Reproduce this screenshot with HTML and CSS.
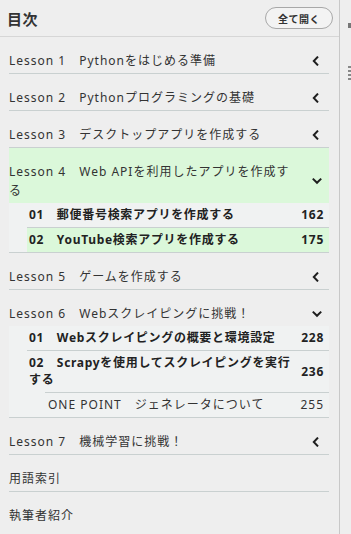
FILE: index.html
```html
<!DOCTYPE html>
<html lang="ja">
<head>
    <meta charset="UTF-8">
    <meta name="viewport" content="width=device-width, initial-scale=1.0">
    <title>目次</title>
    <link rel="stylesheet" href="styles.css">
</head>
<body>

    <div class="app">
        <aside class="toc">
            <div class="toc-head">
                <h1>目次</h1>
                <button class="expand-all">全て開く</button>
            </div>

            <ul class="lessons">
                <li class="lesson">
                    <div class="lesson-row">
                        <span class="lesson-title">Lesson 1　Pythonをはじめる準備</span>
                        <svg class="chev" viewBox="0 0 10 10"><polyline points="6,0.6 1.8,5 6,9.4"/></svg>
                    </div>
                </li>
                <li class="lesson">
                    <div class="lesson-row">
                        <span class="lesson-title">Lesson 2　Pythonプログラミングの基礎</span>
                        <svg class="chev" viewBox="0 0 10 10"><polyline points="6,0.6 1.8,5 6,9.4"/></svg>
                    </div>
                </li>
                <li class="lesson">
                    <div class="lesson-row">
                        <span class="lesson-title">Lesson 3　デスクトップアプリを作成する</span>
                        <svg class="chev" viewBox="0 0 10 10"><polyline points="6,0.6 1.8,5 6,9.4"/></svg>
                    </div>
                </li>
                <li class="lesson">
                    <div class="lesson-row active">
                        <span class="lesson-title">Lesson 4　Web APIを利用したアプリを作成する</span>
                        <svg class="chev" viewBox="0 0 10 10"><polyline points="0.8,2.6 5,6.8 9.2,2.6"/></svg>
                    </div>
                    <ul class="sections">
                        <li class="section">
                            <span class="sec-title">01　郵便番号検索アプリを作成する</span>
                            <span class="page">162</span>
                        </li>
                        <li class="section current">
                            <span class="sec-title">02　YouTube検索アプリを作成する</span>
                            <span class="page">175</span>
                        </li>
                    </ul>
                </li>
                <li class="lesson">
                    <div class="lesson-row">
                        <span class="lesson-title">Lesson 5　ゲームを作成する</span>
                        <svg class="chev" viewBox="0 0 10 10"><polyline points="6,0.6 1.8,5 6,9.4"/></svg>
                    </div>
                </li>
                <li class="lesson">
                    <div class="lesson-row">
                        <span class="lesson-title">Lesson 6　Webスクレイピングに挑戦！</span>
                        <svg class="chev" viewBox="0 0 10 10"><polyline points="0.8,2.6 5,6.8 9.2,2.6"/></svg>
                    </div>
                    <ul class="sections">
                        <li class="section">
                            <span class="sec-title">01　Webスクレイピングの概要と環境設定</span>
                            <span class="page">228</span>
                        </li>
                        <li class="section">
                            <span class="sec-title">02　Scrapyを使用してスクレイピングを実行する</span>
                            <span class="page">236</span>
                        </li>
                        <li class="section point">
                            <span class="sec-title">ONE POINT　ジェネレータについて</span>
                            <span class="page">255</span>
                        </li>
                    </ul>
                </li>
                <li class="lesson">
                    <div class="lesson-row">
                        <span class="lesson-title">Lesson 7　機械学習に挑戦！</span>
                        <svg class="chev" viewBox="0 0 10 10"><polyline points="6,0.6 1.8,5 6,9.4"/></svg>
                    </div>
                </li>
                <li class="lesson">
                    <div class="lesson-row">
                        <span class="lesson-title">用語索引</span>
                    </div>
                </li>
                <li class="lesson">
                    <div class="lesson-row">
                        <span class="lesson-title">執筆者紹介</span>
                    </div>
                </li>
            </ul>
        </aside>

        <!-- edge of the reading pane, cut off by the window -->
        <main class="content">
            <span class="mark"></span>
            <span class="mark dashed"></span>
        </main>
    </div>

</body>
</html>
```

FILE: styles.css
```css
body {
    margin: 0;
    background: #eeeeee;
    font-family: "Noto Sans", "Noto Sans CJK JP", sans-serif;
    color: #333;
}

.app {
    display: flex;
    height: 534px;
    overflow: hidden;
}

.toc {
    width: 339px;
    flex-shrink: 0;
    border-right: 1px solid #c8c8c8;
}

/* Header with title and expand button */
.toc-head {
    height: 36px;
    border-bottom: 1px solid #d6d6d6;
    display: flex;
    justify-content: space-between;
    align-items: center;
    padding: 0 6px 0 7px;
}

.toc-head h1 {
    margin: 0;
    font-family: "Noto Sans CJK JP", sans-serif;
    font-size: 15px;
    font-weight: 700;
    color: #333;
    letter-spacing: 0.5px;
}

.expand-all {
    width: 68px;
    height: 22px;
    border: 1px solid #a8a8a8;
    border-radius: 11px;
    background: #f3f3f3;
    font-family: "Noto Sans CJK JP", sans-serif;
    font-size: 10px;
    font-weight: 700;
    color: #333;
    letter-spacing: 0.5px;
    padding: 0;
}

.lessons {
    list-style: none;
    margin: 0 10px 0 9px;
    padding: 0;
}

.lesson {
    border-bottom: 1px solid #c9d0d0;
}

.lesson:last-child {
    border-bottom: none;
}

.lesson-row {
    display: flex;
    align-items: center;
    padding: 14px 0 3px;
    font-size: 12px;
    line-height: 19px;
    letter-spacing: 1px;
}

.lesson-row.active {
    background: #dbf8da;
}

.lesson-title {
    flex: 1;
}

.chev {
    width: 10px;
    height: 10px;
    margin: 0 7px 0 14px;
    fill: none;
    stroke: #1e1e1e;
    stroke-width: 2;
}

/* Sections under an opened lesson */
.sections {
    list-style: none;
    margin: 0;
    padding: 0;
    background: #f0f2f2;
}

.section {
    display: flex;
    align-items: center;
    gap: 10px;
    margin-left: 18px;
    padding: 3px 5px 4px 2px;
    font-size: 12px;
    line-height: 17px;
    font-weight: 700;
    letter-spacing: 0.7px;
    color: #222;
}

.section + .section {
    border-top: 1px solid #c9d0d0;
}

.section.current {
    background: #dbf8da;
}

.section.point {
    margin-left: 36px;
    padding-left: 3px;
    font-weight: 400;
    letter-spacing: 1px;
    color: #333;
}

.sec-title {
    flex: 1;
}

.content {
    flex: 1;
    padding: 23px 0 0 8px;
    display: flex;
    flex-direction: column;
    gap: 38px;
}

.mark {
    width: 4px;
    height: 5px;
    background: #777;
}

.mark.dashed {
    width: 3px;
    height: 14px;
    background: repeating-linear-gradient(#888 0 2px, transparent 2px 4px);
}
```
